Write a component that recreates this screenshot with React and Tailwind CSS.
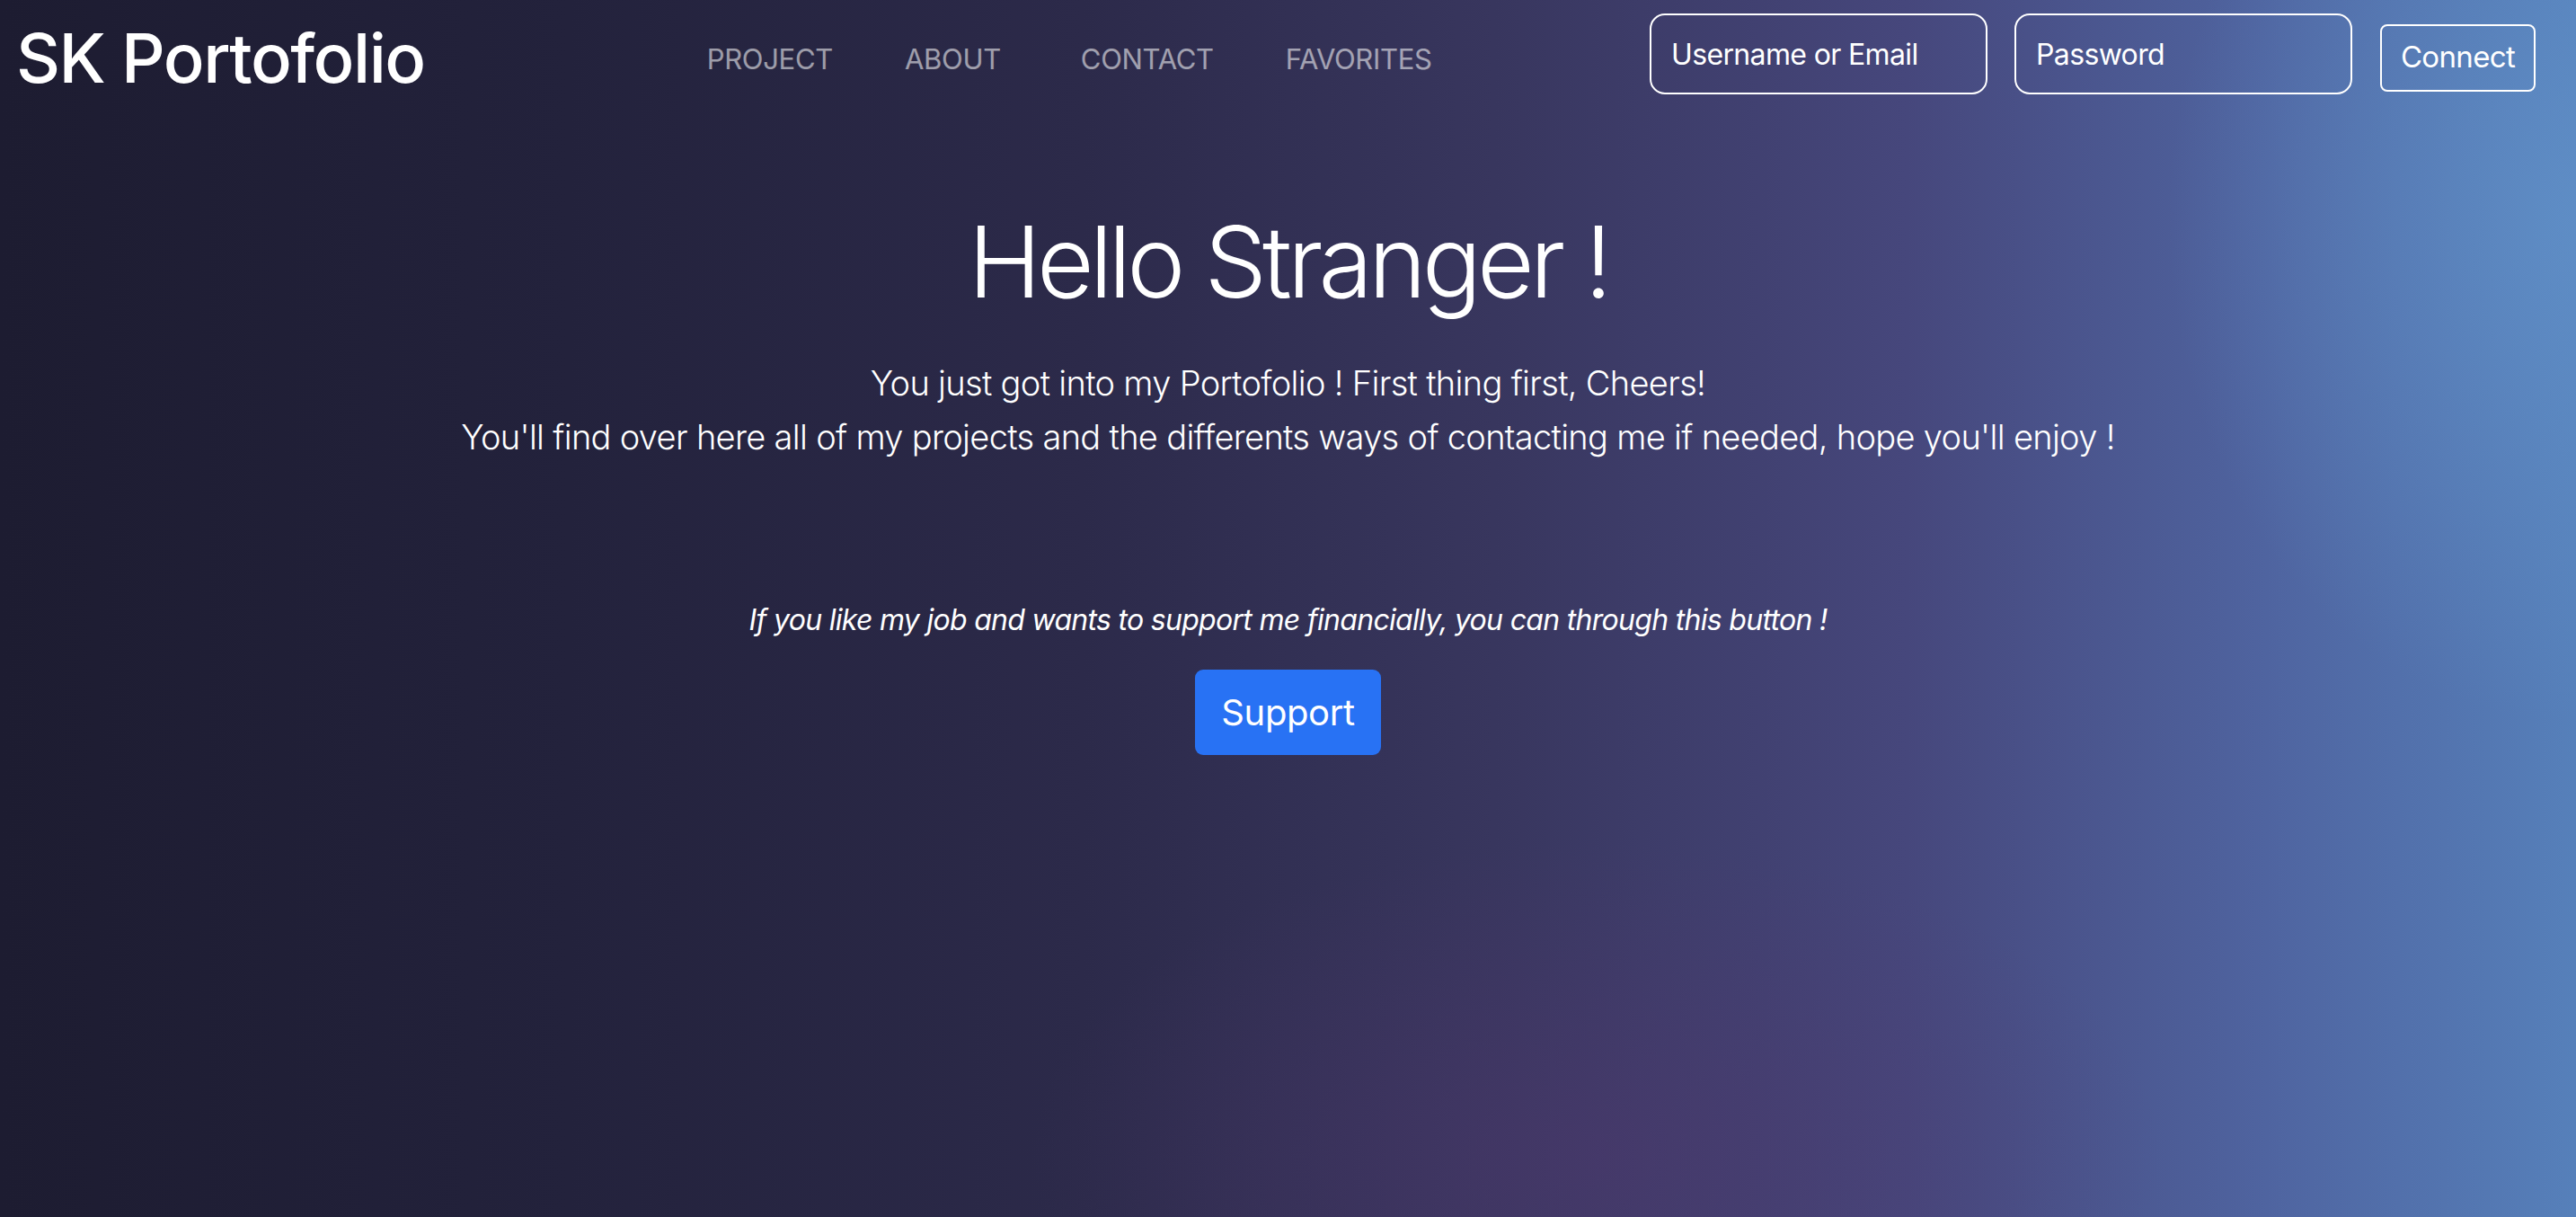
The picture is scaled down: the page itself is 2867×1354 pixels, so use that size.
import React from 'react';

const links = [
  { label: 'PROJECT', cls: '' },
  { label: 'ABOUT', cls: 'mr-[9px]' },
  { label: 'CONTACT', cls: '' },
  { label: 'FAVORITES', cls: '' },
];

const App = () => {
  return (
    <div className="min-h-screen w-full font-['Inter','Helvetica_Neue',Arial,sans-serif] text-white bg-[radial-gradient(ellipse_900px_500px_at_62%_95%,rgba(80,55,110,0.45),transparent_70%),radial-gradient(ellipse_650px_800px_at_100%_18%,rgba(100,150,205,0.6),transparent_70%),linear-gradient(90deg,#1d1c31_0%,#23223c_22%,#2c2a4a_42%,#38365e_58%,#46477c_74%,#4f64a0_88%,#5680ba_100%)]">
      {/* Navbar */}
      <header className="h-[128px] flex items-center pl-[18px] pr-[45px]">
        <a className="text-[76px] leading-none font-medium tracking-[-0.02em] whitespace-nowrap">SK Portofolio</a>
        <nav className="ml-[314px] flex items-center gap-[80px] pt-[4px]">
          {links.map((l) => (
            <a key={l.label} className={`text-[31px] text-white/55 tracking-[-0.01em] ${l.cls}`}>{l.label}</a>
          ))}
        </nav>
        <form className="ml-auto flex items-center" onSubmit={(e) => e.preventDefault()}>
          <input
            placeholder="Username or Email"
            className="w-[376px] h-[90px] -mt-[8px] rounded-[17px] border-2 border-white bg-transparent px-[22px] text-[32px] tracking-[-0.02em] placeholder:text-white outline-none"
          />
          <input
            type="password"
            placeholder="Password"
            className="ml-[30px] w-[376px] h-[90px] -mt-[8px] rounded-[17px] border-2 border-white bg-transparent px-[22px] text-[32px] tracking-[-0.02em] placeholder:text-white outline-none"
          />
          <button className="ml-[31px] w-[173px] h-[75px] rounded-[8px] border-2 border-white text-[33px] tracking-[-0.02em]">
            Connect
          </button>
        </form>
      </header>

      {/* Hero */}
      <main className="flex flex-col items-center text-center">
        <h1 className="mt-[94px] text-[110px] leading-[139px] font-light tracking-[-0.045em]">Hello Stranger !</h1>
        <p className="mt-[35px] text-[38px] leading-[60px] font-light tracking-[-0.018em]">
          You just got into my Portofolio ! First thing first, Cheers!
          <br />
          You'll find over here all of my projects and the differents ways of contacting me if needed, hope you'll enjoy !
        </p>
        <p className="mt-[150px] text-[32px] leading-[48px] italic tracking-[-0.022em]">
          If you like my job and wants to support me financially, you can through this button !
        </p>
        <button className="mt-[31px] h-[95px] px-[29px] rounded-[9px] bg-[#2872f4] text-[40px] tracking-[-0.01em]">Support</button>
      </main>
    </div>
  );
};

export default App;
